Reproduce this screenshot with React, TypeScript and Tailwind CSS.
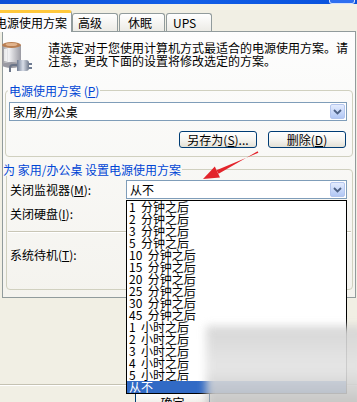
import React from 'react';

const minutes = ['1', '2', '3', '5', '10', '15', '20', '25', '30', '45'];
const hours = ['1', '2', '3', '4', '5'];

const options = [
  ...minutes.map((n) => `${n}  分钟之后`),
  ...hours.map((n) => `${n}  小时之后`),
  '从不',
];

function Combo({ text, className = '' }: { text: string; className?: string }) {
  return (
    <div className={`flex h-[19px] items-center border border-[#7f9db9] bg-white ${className}`}>
      <span className="flex-1 whitespace-nowrap pl-[3px] leading-[13px]">{text}</span>
      <span className="mr-[1px] flex h-[15px] w-[15px] items-center justify-center rounded-[2px] border border-[#b4c6ee] bg-gradient-to-b from-[#e4ecfe] to-[#b1c7f4]">
        <svg width="9" height="6" viewBox="0 0 9 6">
          <path d="M1 1 L4.5 4.5 L8 1" stroke="#4d6185" strokeWidth="1.8" fill="none" />
        </svg>
      </span>
    </div>
  );
}

function XpButton({ children, className = '' }: { children: React.ReactNode; className?: string }) {
  return (
    <div
      className={`flex h-[17px] w-[78px] items-center justify-center rounded-[3px] border border-[#003c74] bg-gradient-to-b from-white via-[#f6f5f1] to-[#e3e1d6] leading-[13px] ${className}`}
    >
      {children}
    </div>
  );
}

function PowerIcon() {
  return (
    <svg width="33" height="33" viewBox="0 0 33 33" className="-ml-[3px]">
      <defs>
        <linearGradient id="body" x1="0" x2="1">
          <stop offset="0" stopColor="#8d8d92" />
          <stop offset="0.35" stopColor="#f4f4f6" />
          <stop offset="1" stopColor="#9a9aa2" />
        </linearGradient>
        <linearGradient id="plug" x1="0" x2="1">
          <stop offset="0" stopColor="#6f7c93" />
          <stop offset="0.5" stopColor="#d9dee8" />
          <stop offset="1" stopColor="#707a8c" />
        </linearGradient>
      </defs>
      <rect x="2" y="5" width="19" height="20" fill="url(#body)" />
      <ellipse cx="11.5" cy="25" rx="9.5" ry="3" fill="#9a9aa2" />
      <ellipse cx="11.5" cy="5" rx="9.5" ry="3" fill="#b97f52" />
      <ellipse cx="11.5" cy="4.5" rx="6" ry="1.6" fill="#e2b48d" />
      <rect x="4" y="9" width="3" height="12" fill="#ffffff" opacity="0.7" />
      <path d="M17 20 h9 a3 3 0 0 1 3 3 v5 a3 3 0 0 1 -3 3 h-9 z" fill="url(#plug)" />
      <rect x="29" y="23" width="3" height="2" fill="#6f7c93" />
      <rect x="29" y="27" width="3" height="2" fill="#6f7c93" />
      <path d="M17 25 h-4 q-3 0 -3 3 v4" stroke="#6b7588" strokeWidth="2" fill="none" />
    </svg>
  );
}

export default function App() {
  return (
    <div className="relative h-[402px] w-[357px] overflow-hidden bg-[#f1efe4] font-['Noto_Sans_CJK_SC','Noto_Sans',sans-serif] text-[12px] text-black">
      {/* Title bar bottom edge */}
      <div className="flex h-[4px] justify-end bg-gradient-to-r from-[#0a4fd6] via-[#1460e8] to-[#0a52dc]">
        <div className="mr-[2px] h-[4px] w-[26px] rounded-b-[3px] border border-t-0 border-white/80 bg-[#2f6ff0]" />
      </div>
      <div className="h-[6px] bg-[#f4f2e7]" />

      {/* Tabs */}
      <div className="-ml-[7px] flex h-[21px] items-end">
        <div className="relative z-10 -mb-px flex h-[22px] w-[79px] items-center rounded-t-[3px] border-x border-t-[3px] border-[#919b9c] border-t-[#ffc83c] bg-[#fcfcfe] pl-[1px] leading-[13px]">
          电源使用方案
        </div>
        <div className="flex h-[18px] w-[46px] items-center rounded-t-[3px] border border-b-0 border-[#919b9c] bg-gradient-to-b from-white to-[#ecebe6] pl-[5px] leading-[13px]">
          高级
        </div>
        <div className="ml-px flex h-[18px] w-[46px] items-center rounded-t-[3px] border border-b-0 border-[#919b9c] bg-gradient-to-b from-white to-[#ecebe6] pl-[8px] leading-[13px]">
          休眠
        </div>
        <div className="ml-px flex h-[18px] w-[46px] items-center rounded-t-[3px] border border-b-0 border-[#919b9c] bg-gradient-to-b from-white to-[#ecebe6] pl-[6px] leading-[13px]">
          UPS
        </div>
      </div>

      {/* Tab page */}
      <div className="ml-[2px] h-[267px] w-[354px] border border-[#919b9c] bg-gradient-to-b from-[#fdfdfd] to-[#f4f3ee]">
        <div className="mt-[8px] flex">
          <PowerIcon />
          <p className="ml-[15px] mt-[1px] whitespace-nowrap leading-[13px]">
            请选定对于您使用计算机方式最适合的电源使用方案。请
            <br />
            注意，更改下面的设置将修改选定的方案。
          </p>
        </div>

        <fieldset className="mx-[2px] mt-[11px] rounded-[4px] border border-[#d0d0bf] pb-[8px]">
          <legend className="ml-[2px] px-[1px] leading-[13px] text-[#0046d5]">
            电源使用方案 (<u>P</u>)
          </legend>
          <Combo text="家用/办公桌" className="ml-[3px] mr-[5px] mt-[5px]" />
          <div className="mt-[10px] flex justify-end gap-[11px] pr-[6px]">
            <XpButton>
              另存为(<u>S</u>)...
            </XpButton>
            <XpButton>
              删除(<u>D</u>)
            </XpButton>
          </div>
        </fieldset>

        <fieldset className="ml-[3px] mr-[2px] mt-[6px] rounded-[4px] border border-[#d0d0bf] pb-[25px]">
          <legend className="-ml-[5px] px-[1px] leading-[13px] text-[#0046d5]">
            为 家用/办公桌 设置电源使用方案
          </legend>
          <div className="mt-[4px] flex h-[19px] items-center">
            <span className="w-[119px] pl-[3px] leading-[13px]">
              关闭监视器(<u>M</u>):
            </span>
            <Combo text="从不" className="w-[221px]" />
          </div>
          {/* the combos of these rows sit under the open list */}
          <div className="mt-[5px] flex h-[19px] items-center">
            <span className="w-[119px] pl-[3px] leading-[13px]">
              关闭硬盘(<u>I</u>):
            </span>
          </div>
          <div className="mx-[1px] mt-[8px] h-[2px] border-t border-b border-t-[#c9c6b6] border-b-white" />
          <div className="mt-[12px] flex h-[19px] items-center">
            <span className="w-[119px] pl-[3px] leading-[13px]">
              系统待机(<u>T</u>):
            </span>
          </div>
        </fieldset>
      </div>

      {/* Dialog bottom */}
      <div className="mt-[86px] h-[2px] border-t border-b border-t-[#c5c2b2] border-b-white" />
      <div className="ml-[135px] mt-[5px] flex h-[23px] w-[75px] justify-center rounded-[3px] border border-[#003c74] bg-gradient-to-b from-white to-[#e3e1d6] pt-[4px] leading-[13px]">
        确定
      </div>

      {/* Open dropdown list */}
      <div className="absolute left-[126px] top-[200px] z-20 w-[221px] border border-black bg-white">
        {options.map((o, i) => (
          <div
            key={o}
            className={`h-[12px] whitespace-pre pl-[2px] text-[12px] leading-[12px] ${
              i === options.length - 1 ? 'bg-[#316ac5] text-white' : ''
            }`}
          >
            {o}
          </div>
        ))}
      </div>

      {/* Red annotation arrow */}
      <svg className="pointer-events-none absolute left-0 top-0 z-30" width="357" height="402">
        <polygon points="203,179 220,177.4 214.8,166.6" fill="#e3242b" />
        <polygon points="218.6,173.8 216.4,170.2 258.4,152.8 257.6,151.2" fill="#e3242b" />
      </svg>

      {/* Blurred watermark */}
      <div className="pointer-events-none absolute left-[206px] top-[326px] z-30 h-[84px] w-[160px] bg-gradient-to-b from-[#d3d3d3] via-[#e4e4e4] to-[#bdbdbd] opacity-90 blur-[4px]" />
    </div>
  );
}
